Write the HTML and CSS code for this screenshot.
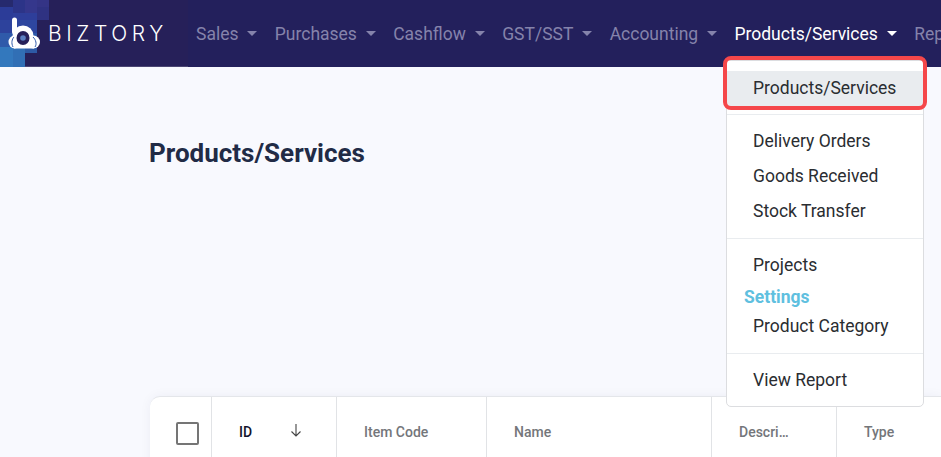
FILE: index.html
```html
<!DOCTYPE html>
<html lang="en">
<head>
    <meta charset="UTF-8">
    <title>Products/Services</title>
    <link rel="stylesheet" href="styles.css">
</head>
<body>
    <header class="topbar">
        <div class="brand">
            <svg class="brand-bg" width="50" height="67" viewBox="0 0 50 67">
                <rect x="0" y="0" width="13" height="7" fill="#262a6e"/>
                <rect x="13" y="0" width="12" height="13" fill="#2c3488"/>
                <rect x="25" y="0" width="12" height="13" fill="#35378c"/>
                <rect x="37" y="0" width="12" height="7" fill="#343486"/>
                <rect x="37" y="7" width="12" height="13" fill="#2f3282"/>
                <rect x="0" y="7" width="13" height="13" fill="#2c3c98"/>
                <rect x="13" y="13" width="24" height="7" fill="#2e3e9a"/>
                <rect x="0" y="20" width="13" height="13" fill="#2d429c"/>
                <rect x="13" y="20" width="24" height="13" fill="#2e469f"/>
                <rect x="0" y="33" width="37" height="14" fill="#2f5aaa"/>
                <rect x="0" y="47" width="13" height="20" fill="#3378bd"/>
                <rect x="13" y="47" width="12" height="20" fill="#316fb5"/>
                <rect x="25" y="47" width="12" height="6" fill="#2d5aa5"/>
            </svg>
            <svg class="brand-mark" width="34" height="33" viewBox="0 0 34 33">
                <path d="M6.500 3V15" fill="none" stroke="#fff" stroke-width="5" stroke-linecap="round"/>
                <circle cx="15" cy="19" r="10.500" fill="#fff"/>
                <ellipse cx="6.500" cy="25" rx="6" ry="6.500" fill="#fff"/>
                <ellipse cx="25.500" cy="25" rx="6.500" ry="6.500" fill="#fff"/>
                <rect x="6" y="25" width="20" height="6.500" fill="#fff"/>
                <path d="M5 30C3 26 4 22 6 20M27 30C29 27 28 23 25 20" fill="none" stroke="#2f5aaa" stroke-width="1"/>
                <ellipse cx="15" cy="21" rx="6.500" ry="7" fill="#262059"/>
                <circle cx="15" cy="21" r="2.800" fill="#5b7fc0"/>
            </svg>
            <span class="brand-name">BIZTORY</span>
        </div>
        <nav class="menu">
            <a class="menu-item">Sales<i class="caret"></i></a>
            <a class="menu-item">Purchases<i class="caret"></i></a>
            <a class="menu-item">Cashflow<i class="caret"></i></a>
            <a class="menu-item">GST/SST<i class="caret"></i></a>
            <a class="menu-item">Accounting<i class="caret"></i></a>
            <a class="menu-item active">Products/Services<i class="caret"></i></a>
            <a class="menu-item">Reports</a>
        </nav>
    </header>

    <main class="content">
        <h1 class="page-title">Products/Services</h1>
        <div class="table-card">
            <div class="cell col-check"><span class="checkbox"></span></div>
            <div class="cell col-id"><span class="id-label">ID</span>
                <svg width="12" height="14" viewBox="0 0 12 14"><path d="M6 1V13M1.500 8.500L6 13L10.500 8.500" fill="none" stroke="#444" stroke-width="1.100"/></svg>
            </div>
            <div class="cell col-code">Item Code</div>
            <div class="cell col-name">Name</div>
            <div class="cell col-desc">Descri…</div>
            <div class="cell col-type">Type</div>
        </div>
    </main>

    <div class="dropdown">
        <a class="drop-item selected">Products/Services</a>
        <hr>
        <a class="drop-item">Delivery Orders</a>
        <a class="drop-item">Goods Received</a>
        <a class="drop-item">Stock Transfer</a>
        <hr class="wide">
        <a class="drop-item">Projects</a>
        <div class="drop-heading">Settings</div>
        <a class="drop-item">Product Category</a>
        <hr class="wide">
        <a class="drop-item">View Report</a>
    </div>
    <div class="highlight"></div>
</body>
</html>
```

FILE: styles.css
```css
body {
    margin: 0;
    height: 457px;
    overflow: hidden;
    background: #f8f9fe;
    font-family: Roboto, sans-serif;
    color: #212529;
    display: flex;
    flex-direction: column;
}
.topbar {
    height: 67px;
    flex-shrink: 0;
    background: #23205c;
    display: flex;
    overflow: hidden;
}
.brand {
    position: relative;
    width: 188px;
    flex-shrink: 0;
    height: 67px;
    box-sizing: border-box;
    background: #262059;
    border-bottom: 1px solid #4b4673;
    display: flex;
    align-items: center;
    padding-left: 48px;
}
.brand-bg {
    position: absolute;
    left: 0;
    top: 0;
}
.brand-mark {
    position: absolute;
    left: 8px;
    top: 17px;
}
.brand-name {
    position: relative;
    color: #fff;
    font-family: Inter, sans-serif;
    font-size: 21px;
    letter-spacing: 4.6px;
    font-weight: 300;
}
.menu {
    display: flex;
    align-items: center;
    padding-left: 8px;
    gap: 17.3px;
    white-space: nowrap;
}
.menu-item {
    font-size: 17.5px;
    color: #8583ab;
    display: flex;
    align-items: center;
}
.menu-item.active {
    color: #fff;
}
.caret {
    margin-left: 9px;
    width: 0;
    height: 0;
    border-left: 5px solid transparent;
    border-right: 5px solid transparent;
    border-top: 5px solid currentColor;
}
.content {
    flex: 1;
    display: flex;
    flex-direction: column;
    padding-left: 149px;
    min-height: 0;
}
.page-title {
    margin: 70px 0 0;
    height: 259px;
    flex-shrink: 0;
    font-size: 26px;
    line-height: 32px;
    font-weight: 700;
    color: #212b46;
}
.table-card {
    height: 80px;
    flex-shrink: 0;
    margin-left: 1px;
    background: #fff;
    border-radius: 10px 0 0 0;
    border-top: 1px solid #e4e6ea;
    box-shadow: 0 0 12px rgba(30, 40, 80, 0.05);
    display: flex;
    font-size: 14px;
    font-weight: 500;
    color: #74767a;
}
.cell {
    box-sizing: border-box;
    height: 100%;
    padding: 26px 0 0 27px;
    line-height: 19px;
    border-right: 1px solid #e1e3e6;
}
.col-check { width: 62px; padding: 25px 0 0 26px; }
.col-id { width: 125px; display: flex; justify-content: space-between; padding-right: 34px; }
.col-code { width: 150px; }
.col-name { width: 225px; }
.col-desc { width: 125px; }
.col-type { border-right: 0; flex: 1; }
.checkbox {
    display: block;
    box-sizing: border-box;
    width: 23px;
    height: 23px;
    border: 2px solid #757575;
    border-radius: 2px;
}
.id-label { color: #14142b; }
.dropdown {
    position: absolute;
    left: 726px;
    top: 60px;
    width: 198px;
    height: 347px;
    box-sizing: border-box;
    background: #fff;
    border: 1px solid #dcdde0;
    border-radius: 0 0 5px 5px;
    padding-top: 10px;
    font-size: 17.5px;
}
.drop-item {
    display: block;
    height: 35px;
    line-height: 35px;
    padding-left: 26px;
    color: #2a2d31;
}
.drop-item.selected {
    background: #e9ecef;
}
.dropdown hr {
    margin: 8px 0 9px;
    border: 0;
    border-top: 1px solid #e9ecef;
}
.dropdown hr.wide {
    margin-top: 9px;
}
.drop-heading {
    font-weight: 700;
    color: #5fc0df;
    padding-left: 17px;
    height: 26px;
    line-height: 28px;
}
.highlight {
    position: absolute;
    left: 723px;
    top: 56px;
    width: 204px;
    height: 54px;
    box-sizing: border-box;
    border: 4px solid #f5474a;
    border-radius: 8px;
}
```
